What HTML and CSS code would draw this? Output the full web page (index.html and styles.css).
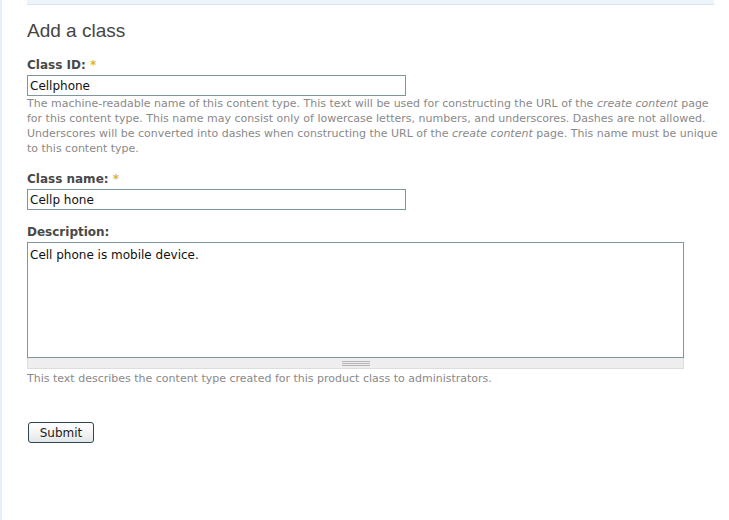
FILE: index.html
```html
<!DOCTYPE html>
<html>
<head>
<meta charset="utf-8">
<link rel="stylesheet" href="styles.css">
</head>
<body>
<div class="page">
  <div class="content">
    <div class="topbar"></div>
    <h2 class="title">Add a class</h2>
    <form class="form">
      <div class="form-item">
        <label class="label">Class ID: <span class="req">*</span></label>
        <input class="text-input" type="text" value="Cellphone">
        <div class="help help-wide">The machine-readable name of this content type. This text will be used for constructing the URL of the <em>create content</em> page for this content type. This name may consist only of lowercase letters, numbers, and underscores. Dashes are not allowed. Underscores will be converted into dashes when constructing the URL of the <em>create content</em> page. This name must be unique to this content type.</div>
      </div>
      <div class="form-item">
        <label class="label">Class name: <span class="req">*</span></label>
        <input class="text-input" type="text" value="Cellp hone">
      </div>
      <div class="form-item form-item-desc">
        <label class="label">Description:</label>
        <div class="textarea-wrap">
          <textarea class="textarea">Cell phone is mobile device.</textarea>
          <div class="grippie"><span class="grip-lines"></span></div>
        </div>
        <div class="help help-desc">This text describes the content type created for this product class to administrators.</div>
      </div>
      <button class="submit" type="button">Submit</button>
    </form>
  </div>
</div>
</body>
</html>
```

FILE: styles.css
```css
html, body {
  margin: 0;
  padding: 0;
  background: #ffffff;
}
body {
  font-family: "DejaVu Sans", Verdana, sans-serif;
  color: #494949;
}
.page {
  min-height: 520px;
  border-left: 2px solid #e6eff6;
}
.content {
  margin-left: 25px;
  width: 687px;
}
.topbar {
  height: 4px;
  background: #edf5fa;
  border-bottom: 1px solid #d6e5ef;
}
.title {
  margin: 15px 0 16px;
  font-family: "Liberation Sans", Arial, sans-serif;
  font-weight: normal;
  font-size: 19px;
  line-height: 22px;
  color: #454545;
}
.form {
  margin: 0;
}
.form-item {
  margin-bottom: 16px;
}
.form-item-desc {
  margin-top: -1px;
}
.label {
  display: block;
  font-size: 12px;
  line-height: 15px;
  font-weight: bold;
  color: #494949;
  margin-bottom: 2px;
}
.req {
  color: #e0b33a;
  font-weight: bold;
}
.text-input {
  display: block;
  box-sizing: border-box;
  width: 379px;
  height: 21px;
  margin: 0;
  padding: 0 2px;
  border: 1px solid #7f979c;
  font-family: "DejaVu Sans", Verdana, sans-serif;
  font-size: 12px;
  color: #111;
  background: #fff;
  outline: none;
}
.help {
  font-size: 11px;
  line-height: 15px;
  color: #898989;
}
.help-wide {
  width: 698px;
}
.help em {
  font-style: italic;
}
.help-desc {
  margin-top: 2px;
}
.textarea-wrap {
  width: 657px;
}
.textarea {
  display: block;
  box-sizing: border-box;
  width: 657px;
  height: 116px;
  margin: 0;
  padding: 5px 2px 2px;
  border: 1px solid #7f979c;
  font-family: "DejaVu Sans", Verdana, sans-serif;
  font-size: 12px;
  line-height: 15px;
  color: #111;
  resize: none;
  outline: none;
}
.grippie {
  box-sizing: border-box;
  height: 11px;
  background: #eeeeee;
  border: 1px solid #dddddd;
  border-top: none;
  display: flex;
  justify-content: center;
  align-items: center;
}
.grip-lines {
  display: block;
  width: 28px;
  height: 5px;
  background: repeating-linear-gradient(to bottom, #b5b5b5 0, #b5b5b5 1px, transparent 1px, transparent 2px);
}
.submit {
  display: block;
  box-sizing: border-box;
  margin: 36px 0 0 1px;
  width: 66px;
  height: 21px;
  padding: 0;
  border: 1px solid #2e4552;
  border-radius: 3px;
  background: linear-gradient(to bottom, #ffffff 0%, #f4f4f4 50%, #e2e6e8 100%);
  font-family: "DejaVu Sans", Verdana, sans-serif;
  font-size: 12px;
  color: #222;
}
```
